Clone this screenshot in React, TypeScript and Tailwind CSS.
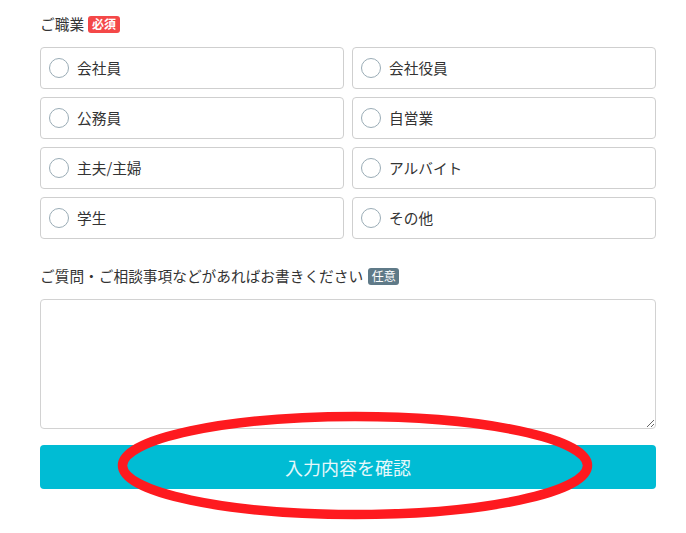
import React from "react";

const options = [
  "会社員",
  "会社役員",
  "公務員",
  "自営業",
  "主夫/主婦",
  "アルバイト",
  "学生",
  "その他",
];

export default function App() {
  return (
    <div
      className="relative w-[686px] min-h-[533px] bg-white pl-[40px] pr-[30px] pt-[14px] text-[#333]"
      style={{ fontFamily: '"Noto Sans CJK JP", "Noto Sans", sans-serif' }}
    >
      <div className="flex h-[20px] items-center">
        <span className="text-[14.7px] leading-none">ご職業</span>
        <span className="ml-[4px] flex h-[17px] w-[32px] items-center justify-center rounded-[3px] bg-[#f44848] text-[12px] font-bold leading-none text-white">
          必須
        </span>
      </div>

      <div className="mt-[13px] grid grid-cols-2 gap-[8px]">
        {options.map((o) => (
          <label
            key={o}
            className="flex h-[42px] items-center rounded-[4px] border border-[#cfcfcf] pl-[8px]"
          >
            <span className="h-[20px] w-[20px] rounded-full border border-[#9aacb6] bg-white" />
            <span className="ml-[8px] text-[14.7px] leading-none">{o}</span>
          </label>
        ))}
      </div>

      <div className="mt-[27px] flex h-[20px] items-center">
        <span className="text-[14.7px] leading-none">
          ご質問・ご相談事項などがあればお書きください
        </span>
        <span className="ml-[5px] flex h-[17px] w-[31px] items-center justify-center rounded-[3px] bg-[#5f7a88] text-[12px] leading-none text-white">
          任意
        </span>
      </div>

      <textarea className="mt-[13px] block h-[130px] w-full rounded-[4px] border border-[#d2d2d2] bg-white outline-none" />

      <button className="mt-[16px] flex h-[44px] w-full items-center justify-center rounded-[4px] bg-[#00bcd4] text-[18px] text-[#e6f8fb]">
        入力内容を確認
      </button>

      <svg
        className="pointer-events-none absolute left-0 top-0"
        width="686"
        height="533"
        viewBox="0 0 686 533"
      >
        <ellipse
          cx="355"
          cy="465.5"
          rx="232.5"
          ry="49"
          fill="none"
          stroke="#fe1a1f"
          strokeWidth="9.5"
        />
      </svg>
    </div>
  );
}
